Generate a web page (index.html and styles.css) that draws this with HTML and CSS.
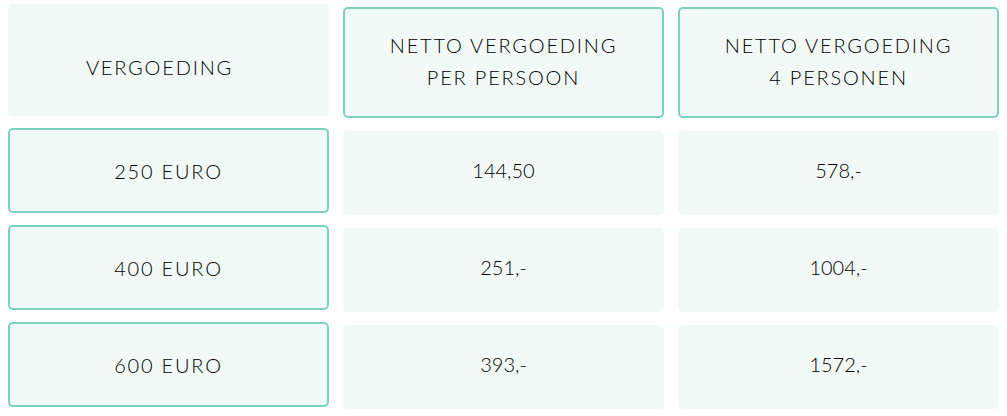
FILE: index.html
```html
<!DOCTYPE html>
<html lang="nl">
<head>
<meta charset="utf-8">
<link rel="stylesheet" href="styles.css">
</head>
<body>
<div class="table">
  <div class="cell head plain"><span class="label">VERGOEDING</span></div>
  <div class="cell head framed"><span class="label">NETTO VERGOEDING<br>PER PERSOON</span></div>
  <div class="cell head framed"><span class="label">NETTO VERGOEDING<br>4 PERSONEN</span></div>

  <div class="cell body framed"><span class="label">250 EURO</span></div>
  <div class="cell body plain"><span class="num">144,50</span></div>
  <div class="cell body plain"><span class="num">578,-</span></div>

  <div class="cell body framed"><span class="label">400 EURO</span></div>
  <div class="cell body plain"><span class="num">251,-</span></div>
  <div class="cell body plain"><span class="num">1004,-</span></div>

  <div class="cell body framed"><span class="label">600 EURO</span></div>
  <div class="cell body plain"><span class="num">393,-</span></div>
  <div class="cell body plain"><span class="num">1572,-</span></div>
</div>
</body>
</html>
```

FILE: styles.css
```css
html, body {
  margin: 0;
  padding: 0;
  background: #ffffff;
}

body {
  font-family: Lato, "Open Sans", sans-serif;
  color: #000000;
}

.table {
  display: grid;
  grid-template-columns: repeat(3, 321px);
  grid-template-rows: 114px 87px 87px 87px;
  column-gap: 14px;
  row-gap: 10px;
  padding: 4px 8px 0 8px;
}

.cell {
  display: flex;
  align-items: center;
  justify-content: center;
  text-align: center;
  background: #f1faf7;
  border-radius: 5px;
  box-sizing: border-box;
}

.framed {
  border: 2px solid #7bd3bf;
}

.head.plain {
  margin-bottom: 2px;
  padding-top: 14px;
  padding-right: 18px;
}

.head.framed {
  margin-top: 3px;
  padding-bottom: 4px;
}

.body.framed {
  margin-bottom: 2px;
}

.body.plain {
  margin-top: 3px;
  padding-bottom: 6px;
}

.label {
  font-size: 20px;
  letter-spacing: 1.8px;
  line-height: 32px;
  font-weight: 300;
}

.num {
  font-size: 20px;
  line-height: 32px;
  font-weight: 300;
}
```
